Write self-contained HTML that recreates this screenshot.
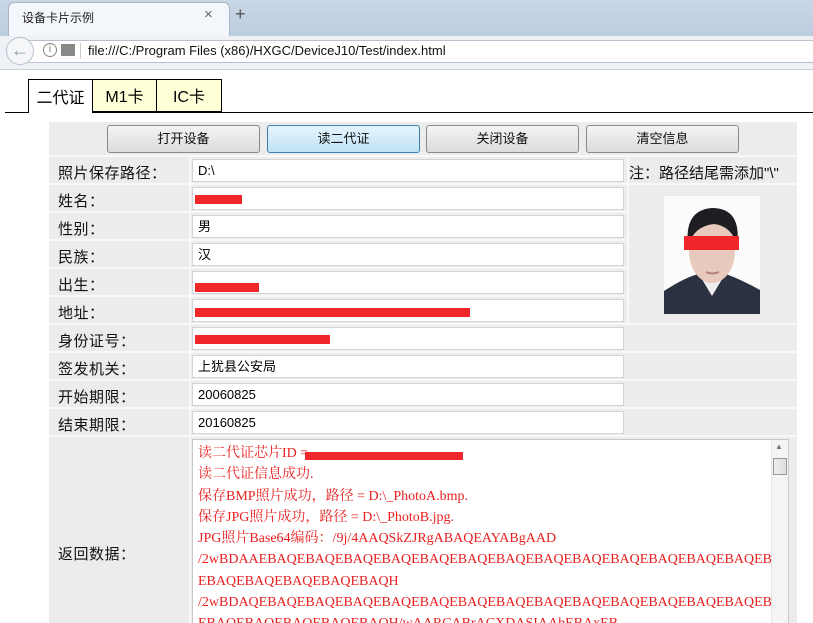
<!DOCTYPE html>
<html><head><meta charset="utf-8"><style>
*{margin:0;padding:0;box-sizing:border-box}
body{width:813px;height:623px;overflow:hidden;background:#fff;font-family:"Liberation Sans","Noto Sans CJK SC",sans-serif;position:relative}
.a{position:absolute}
.lbl{position:absolute;left:58px;font-size:15px;color:#111;letter-spacing:0.5px}
.inp{position:absolute;left:192px;width:432px;height:23px;background:#fff;border:1px solid #d4d4d4;font-size:13px;padding:0 5px;line-height:21px;color:#000}
.btn{position:absolute;top:125px;height:28px;width:153px;border:1px solid #8a8a8a;border-radius:3px;background:linear-gradient(#f3f3f3,#dcdcdc);font-size:13px;text-align:center;line-height:26px;color:#111}
.sep{position:absolute;left:49px;width:748px;height:2px;background:#f8f8f8}
.red{position:absolute;background:#f0262b;height:9px}
.mono{font-family:"Liberation Serif","Noto Serif CJK SC",serif;color:#e82020;font-size:14px;line-height:21.3px;white-space:nowrap}
</style></head><body>
<div class="a" style="left:0;top:0;width:813px;height:36px;background:linear-gradient(#c9d7e6,#bccde0)"></div>
<div class="a" style="left:8px;top:2px;width:222px;height:34px;background:#f3f6fa;border:1px solid #aab6c4;border-bottom:none;border-radius:6px 6px 0 0"></div>
<div class="a" style="left:22px;top:9px;font-size:12px;color:#222">设备卡片示例</div>
<div class="a" style="left:204px;top:6px;font-size:15px;color:#666">×</div>
<div class="a" style="left:235px;top:4px;font-size:18px;color:#555">+</div>
<div class="a" style="left:0;top:36px;width:813px;height:34px;background:#eef2f7;border-bottom:1px solid #c8cfd8"></div>
<div class="a" style="left:26px;top:40px;width:787px;height:23px;background:#fff;border:1px solid #b8c2cd;border-right:none"></div>
<div class="a" style="left:6px;top:37px;width:28px;height:28px;border-radius:50%;background:#f4f6f8;border:1px solid #b8c2cd;color:#8a96a3;font-size:18px;text-align:center;line-height:25px">&#8592;</div>
<div class="a" style="left:43px;top:43px;width:14px;height:14px;border-radius:50%;border:1px solid #888;font-size:10px;text-align:center;line-height:12px;color:#777">i</div>
<div class="a" style="left:61px;top:44px;width:14px;height:12px;background:#888"></div>
<div class="a" style="left:80px;top:43px;width:1px;height:16px;background:#ccc"></div>
<div class="a" style="left:88px;top:43px;font-size:13px;color:#111">file:///C:/Program Files (x86)/HXGC/DeviceJ10/Test/index.html</div>
<div class="a" style="left:5px;top:112px;width:808px;height:1px;background:#000"></div>
<div class="a" style="left:28px;top:79px;width:65px;height:34px;background:#fff;border:1px solid #000;border-bottom:none;font-size:16px;text-align:center;line-height:38px">二代证</div>
<div class="a" style="left:92px;top:79px;width:65px;height:33px;background:#ffffd8;border:1px solid #000;font-size:16px;text-align:center;line-height:36px">M1卡</div>
<div class="a" style="left:156px;top:79px;width:66px;height:33px;background:#ffffd8;border:1px solid #000;font-size:16px;text-align:center;line-height:36px">IC卡</div>
<div class="a" style="left:49px;top:122px;width:748px;height:501px;background:#ececec"></div>
<div class="btn" style="left:107px">打开设备</div>
<div class="btn" style="left:267px;background:linear-gradient(#e6f4fc,#bfe3f7);border-color:#3c7fb1">读二代证</div>
<div class="btn" style="left:426px">关闭设备</div>
<div class="btn" style="left:586px">清空信息</div>
<div class="sep" style="top:155px"></div>
<div class="sep" style="top:183px"></div>
<div class="sep" style="top:211px;width:580px"></div>
<div class="sep" style="top:239px;width:580px"></div>
<div class="sep" style="top:267px;width:580px"></div>
<div class="sep" style="top:295px;width:580px"></div>
<div class="sep" style="top:323px"></div>
<div class="sep" style="top:351px"></div>
<div class="sep" style="top:379px"></div>
<div class="sep" style="top:407px"></div>
<div class="sep" style="top:435px"></div>
<div class="a" style="left:189px;top:155px;width:2px;height:468px;background:#f8f8f8"></div>
<div class="a" style="left:627px;top:155px;width:2px;height:168px;background:#f8f8f8"></div>

<div class="lbl" style="top:162px">照片保存路径：</div>
<div class="lbl" style="top:190px">姓名：</div>
<div class="lbl" style="top:218px">性别：</div>
<div class="lbl" style="top:246px">民族：</div>
<div class="lbl" style="top:274px">出生：</div>
<div class="lbl" style="top:302px">地址：</div>
<div class="lbl" style="top:330px">身份证号：</div>
<div class="lbl" style="top:358px">签发机关：</div>
<div class="lbl" style="top:386px">开始期限：</div>
<div class="lbl" style="top:414px">结束期限：</div>
<div class="lbl" style="top:543px">返回数据：</div>

<div class="inp" style="top:159px">D:\</div>
<div class="inp" style="top:187px"></div>
<div class="inp" style="top:215px">男</div>
<div class="inp" style="top:243px">汉</div>
<div class="inp" style="top:271px"></div>
<div class="inp" style="top:299px"></div>
<div class="inp" style="top:327px"></div>
<div class="inp" style="top:355px">上犹县公安局</div>
<div class="inp" style="top:383px">20060825</div>
<div class="inp" style="top:411px">20160825</div>
<div class="red" style="left:195px;top:195px;width:47px"></div>
<div class="red" style="left:195px;top:283px;width:64px"></div>
<div class="red" style="left:195px;top:308px;width:275px"></div>
<div class="red" style="left:195px;top:335px;width:135px"></div>

<div class="a" style="left:629px;top:162px;font-size:15px;color:#111">注：路径结尾需添加"\"</div>
<svg class="a" style="left:664px;top:196px" width="96" height="118" viewBox="0 0 96 118">
<rect width="96" height="118" fill="#fbfbfb"/>
<path d="M0 118 L0 95 Q20 82 34 78 L62 78 Q78 84 96 94 L96 118Z" fill="#2b3140"/>
<path d="M36 80 L48 100 L60 80Z" fill="#eee"/>
<ellipse cx="48" cy="55" rx="23" ry="32" fill="#e8c9bd"/>
<path d="M24 50 Q20 14 48 12 Q78 12 73 50 Q68 30 50 28 Q30 30 24 50Z" fill="#1e1e22"/>
<rect x="20" y="40" width="55" height="14" fill="#f0262b"/>
<path d="M42 76 Q48 79 55 76" stroke="#b5817a" stroke-width="2" fill="none"/>
</svg>
<div class="a" style="left:192px;top:439px;width:597px;height:184px;background:#fff;border:1px solid #c8c8c8;border-bottom:none;overflow:hidden">
<div class="mono" style="padding:3px 0 0 5px">读二代证芯片ID = <br>读二代证信息成功.<br>保存BMP照片成功，路径 = D:\_PhotoA.bmp.<br>保存JPG照片成功，路径 = D:\_PhotoB.jpg.<br>JPG照片Base64编码：/9j/4AAQSkZJRgABAQEAYABgAAD<br>/2wBDAAEBAQEBAQEBAQEBAQEBAQEBAQEBAQEBAQEBAQEBAQEBAQEBAQEBAQEBAQEBAQEBAQEBAQ<br>EBAQEBAQEBAQEBAQEBAQH<br>/2wBDAQEBAQEBAQEBAQEBAQEBAQEBAQEBAQEBAQEBAQEBAQEBAQEBAQEBAQEBAQEBAQEBAQEBAQ<br>EBAQEBAQEBAQEBAQEBAQH/wAARCABrACXDASIAAhEBAxEB</div>
<div class="a" style="left:578px;top:0;width:17px;height:184px;background:#f4f4f4;border-left:1px solid #e4e4e4"></div>
<div class="a" style="left:582px;top:2px;font-size:8px;color:#777">▲</div>
<div class="a" style="left:580px;top:18px;width:14px;height:17px;background:linear-gradient(90deg,#eee,#ddd);border:1px solid #999"></div>
</div>
<div class="red" style="left:305px;top:452px;width:158px;height:8px"></div>
</body></html>
